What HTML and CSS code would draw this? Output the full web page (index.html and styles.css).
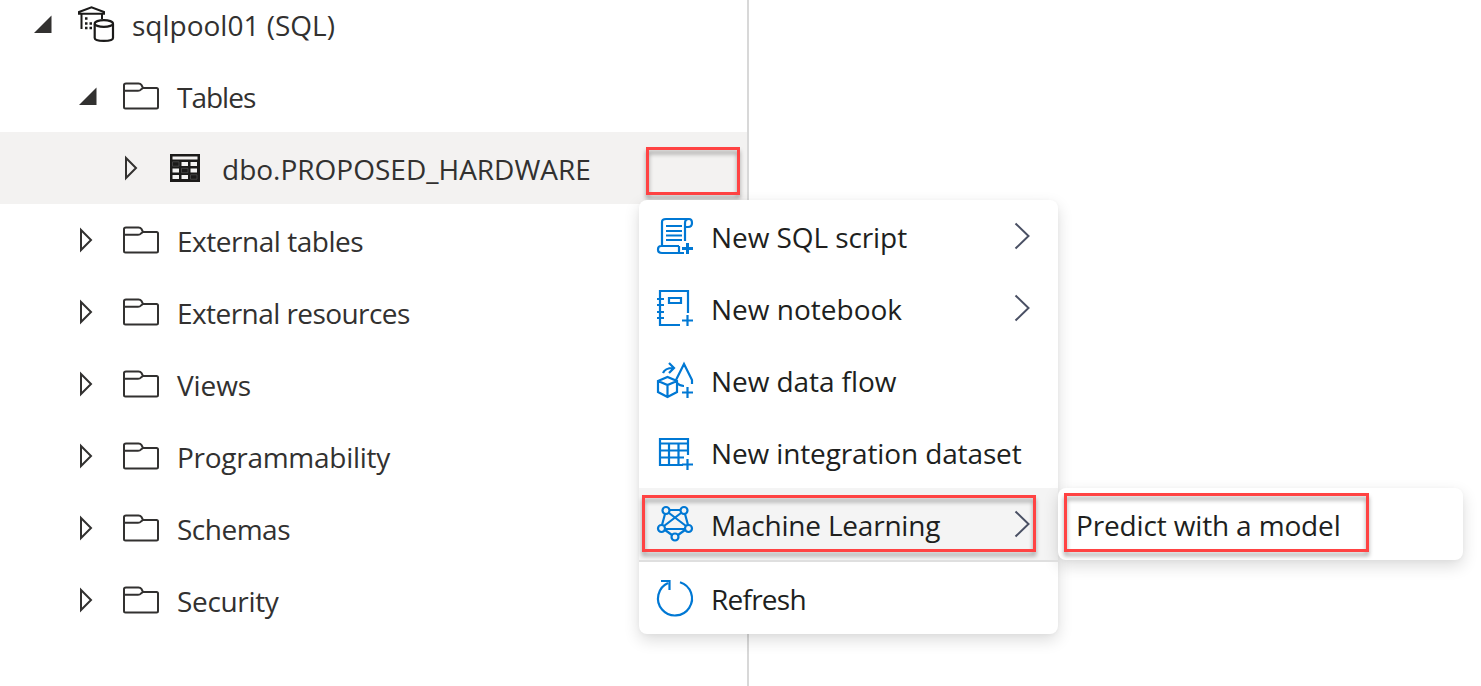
FILE: index.html
```
<!DOCTYPE html>
<html lang="en">
<head>
<meta charset="utf-8">
<title>Data explorer</title>
<link rel="stylesheet" href="styles.css">
</head>
<body>
<svg class="defs" aria-hidden="true">
  <symbol id="open" viewBox="0 0 18 18"><path d="M0 18 17.500 0.500V18z" fill="#323130"/></symbol>
  <symbol id="closed" viewBox="0 0 14 26"><path d="M2 3V23L12 13z" fill="none" stroke="#323130" stroke-width="2"/></symbol>
  <symbol id="folder" viewBox="0 0 36 28"><path d="M1 3Q1 1.500 3 1.500H15.500Q17.500 1.500 18.500 3L20 6H33.500Q35 6 35 7.500V25Q35 26.500 33.500 26.500H2.500Q1 26.500 1 25zM1 8.800H15Q17 8.800 18 7.500L20 6" fill="none" stroke="#323130" stroke-width="2"/></symbol>
  <symbol id="chevron" viewBox="0 0 16 28"><path d="M1.500 1.500 14.500 14 1.500 26.500" fill="none" stroke="#4a5064" stroke-width="2"/></symbol>
</svg>
<main class="app">
  <nav class="tree">
    <div class="row root"><svg class="caret"><use href="#open"/></svg>
      <svg class="pool" viewBox="0 0 36 36" fill="none" stroke="#1b1a19" stroke-width="2"><path d="M1 7.800V6L13.500 1.200 26 6V7.800zM3.500 8V23M24 8V13"/><path d="M7 12.500h2.500M7 17.500h2.500M7 22h2.500M11.500 17.500H14M11.500 22H14" stroke-width="2.400"/><path d="M16.700 18V32C16.700 35.800 35 35.800 35 32V18" stroke-width="2.200"/><ellipse cx="25.850" cy="17.500" rx="9.150" ry="3.400" stroke-width="2.200"/></svg>
      <span class="label t1">sqlpool01 (SQL)</span></div>
    <div class="row l1"><svg class="caret"><use href="#open"/></svg><svg class="folder"><use href="#folder"/></svg><span class="label t2">Tables</span></div>
    <div class="row l2 selected"><svg class="arrow"><use href="#closed"/></svg>
      <svg class="table" viewBox="0 0 30 28"><path d="M0 0h30v28H0z" fill="#1b1a19"/><path d="M2.500 2.500h25v3h-25zM11.500 8h6.500v4h-6.500zM20.500 8h6.500v4h-6.500zM2.500 14.500H9v4H2.500zM20.500 14.500h6.500v4h-6.500zM2.500 21H9v4H2.500zM11.500 21h6.500v4h-6.500z" fill="#f3f2f1"/><path d="M2.500 7.800H9v4.400H2.500zM11.500 14.300h6.500v4.400h-6.500zM20.500 20.800h6.500v4.400h-6.500z" fill="none" stroke="#555" stroke-width=".7"/></svg>
      <span class="label t3">dbo.PROPOSED_HARDWARE</span></div>
    <div class="row l1"><svg class="arrow"><use href="#closed"/></svg><svg class="folder"><use href="#folder"/></svg><span class="label t4">External tables</span></div>
    <div class="row l1"><svg class="arrow"><use href="#closed"/></svg><svg class="folder"><use href="#folder"/></svg><span class="label t5">External resources</span></div>
    <div class="row l1"><svg class="arrow"><use href="#closed"/></svg><svg class="folder"><use href="#folder"/></svg><span class="label t6">Views</span></div>
    <div class="row l1"><svg class="arrow"><use href="#closed"/></svg><svg class="folder"><use href="#folder"/></svg><span class="label t7">Programmability</span></div>
    <div class="row l1"><svg class="arrow"><use href="#closed"/></svg><svg class="folder"><use href="#folder"/></svg><span class="label t8">Schemas</span></div>
    <div class="row l1"><svg class="arrow"><use href="#closed"/></svg><svg class="folder"><use href="#folder"/></svg><span class="label t9">Security</span></div>
  </nav>
  <div class="mark mark-more"></div>
  <div class="menu">
    <div class="item"><svg class="icon" viewBox="0 0 36 36"><path d="M5 28V4Q5 1 9 1H32Q35 1 35 5T31 9H28V5Q28 1 32 1M28 8V23M22 28H4Q1 28 1 31.500T5 35H27M22 28V35H27M9 8H25M9 13H25M9 17.500H25M9 22H25"/><path d="M30.500 25V36M25 30.500H36" stroke-width="3"/></svg><span class="label m1">New SQL script</span><svg class="chev"><use href="#chevron"/></svg></div>
    <div class="item"><svg class="icon" viewBox="0 0 36 36"><path d="M23 35H3V1H31V23M12 8H24V13H12zM0 9H7M0 15H7M0 22H7M0 28H7M30.500 25V36M25 30.500H36"/></svg><span class="label m2">New notebook</span><svg class="chev"><use href="#chevron"/></svg></div>
    <div class="item"><svg class="icon" viewBox="0 0 36 36"><path d="M1 19 10.500 15 20 19V30L10.500 35 1 30zM1 19 10.500 23 20 19M10.500 23V35M6 11Q8 6 16 6M12 1 17 6 12 11M19 18 27 2 35 18V22M20 21Q23 24 27 24M30.500 25V36M25 30.500H36"/></svg><span class="label m3">New data flow</span></div>
    <div class="item"><svg class="icon" viewBox="0 0 36 36"><path d="M26 31H3V5H31V21M3 9.500H31M3 16.500H31M3 23.500H27M12 9.500V31M21.500 9.500V31M30.500 25V36M25 30.500H36"/></svg><span class="label m4">New integration dataset</span></div>
    <div class="item active"><svg class="icon" viewBox="0 0 36 36"><path d="M12 4H24M8 8 5 19M28 8 31 19M12 7 29 20M24 7 7 20M8 23H28M8 24 15 29M28 24 21 29"/><circle cx="9" cy="4.500" r="3.500"/><circle cx="27" cy="4.500" r="3.500"/><circle cx="4.500" cy="22.500" r="3.500"/><circle cx="31.500" cy="22.500" r="3.500"/><circle cx="18" cy="31" r="3.500"/></svg><span class="label m5">Machine Learning</span><svg class="chev"><use href="#chevron"/></svg>
      <div class="mark mark-ml"></div>
      <div class="submenu"><span class="label m7">Predict with a model</span><div class="mark mark-predict"></div></div>
    </div>
    <div class="item refresh"><svg class="icon" viewBox="0 0 36 36"><path d="M23 2.250A17 17 0 1 1 11 3M4 1H12.500V10"/></svg><span class="label m6">Refresh</span></div>
  </div>
</main>
</body>
</html>
```
FILE: styles.css
```
* { box-sizing: border-box; }
body { margin: 0; background: #fff; font: 28px/72px "Open Sans", sans-serif; color: #323130; }
svg { display: block; flex: none; overflow: visible; }
.defs { position: absolute; width: 0; height: 0; }
.app { position: relative; width: 1481px; height: 686px; overflow: hidden; }
.tree { width: 749px; height: 686px; border-right: 2px solid #d8d8d8; }
.row { display: flex; align-items: center; height: 72px; }
.root { height: 60px; padding: 0 0 12px 34px; }
.l1 { padding-left: 79px; }
.l2 { padding-left: 124px; }
.selected { background: #f3f2f1; }
.caret { width: 18px; height: 18px; }
.arrow { width: 14px; height: 26px; }
.label { white-space: nowrap; padding-top: 2px; }
.t2 { letter-spacing: -1px; }
.t4 { letter-spacing: -.47px; }
.t5 { letter-spacing: -.56px; }
.t6 { letter-spacing: -.1px; }
.t7 { letter-spacing: -.27px; }
.t8 { letter-spacing: -.5px; }
.t9 { letter-spacing: -.33px; }
.m1, .m3 { letter-spacing: -.08px; }
.m4 { letter-spacing: -.13px; }
.m5 { letter-spacing: -.21px; }
.m6 { letter-spacing: -.75px; }
.m7 { letter-spacing: -.15px; }
.folder { width: 36px; height: 28px; margin: 0 18px 0 26px; }
.arrow + .folder { margin-left: 30px; }
.pool { width: 36px; height: 36px; margin: 0 18px 0 26px; }
.table { width: 30px; height: 28px; margin: 0 22px 0 32px; }
.menu { position: absolute; left: 639px; top: 200px; width: 419px; height: 434px; background: #fff; border-radius: 8px; color: #201f1e; box-shadow: 0 6px 16px rgba(0,0,0,.14), 0 1px 4px rgba(0,0,0,.03); }
.item { position: relative; display: flex; align-items: center; height: 72px; padding: 0 28px 0 18px; }
.icon { width: 36px; height: 36px; margin-right: 18px; fill: none; stroke: #0078d4; stroke-width: 2.2; }
.chev { width: 16px; height: 28px; margin-left: auto; }
.active { background: #f4f4f4; }
.refresh { height: 74px; border-top: 2px solid #dfdfdf; }
.submenu { position: absolute; left: 419px; top: 0; width: 405px; height: 72px; padding-left: 18px; background: #fff; border-radius: 8px; box-shadow: 0 6px 16px rgba(0,0,0,.14), 0 1px 4px rgba(0,0,0,.03); }
.submenu .label { display: block; padding-top: 1px; }
.mark { position: absolute; border: 3px solid #ff4343; filter: drop-shadow(0 4px 2px rgba(0,0,0,.35)); }
.mark-more { left: 646px; top: 147px; width: 94px; height: 48px; }
.mark-ml { left: 3px; top: 7px; width: 394px; height: 57px; }
.mark-predict { left: 6px; top: 5px; width: 305px; height: 59px; }
```
